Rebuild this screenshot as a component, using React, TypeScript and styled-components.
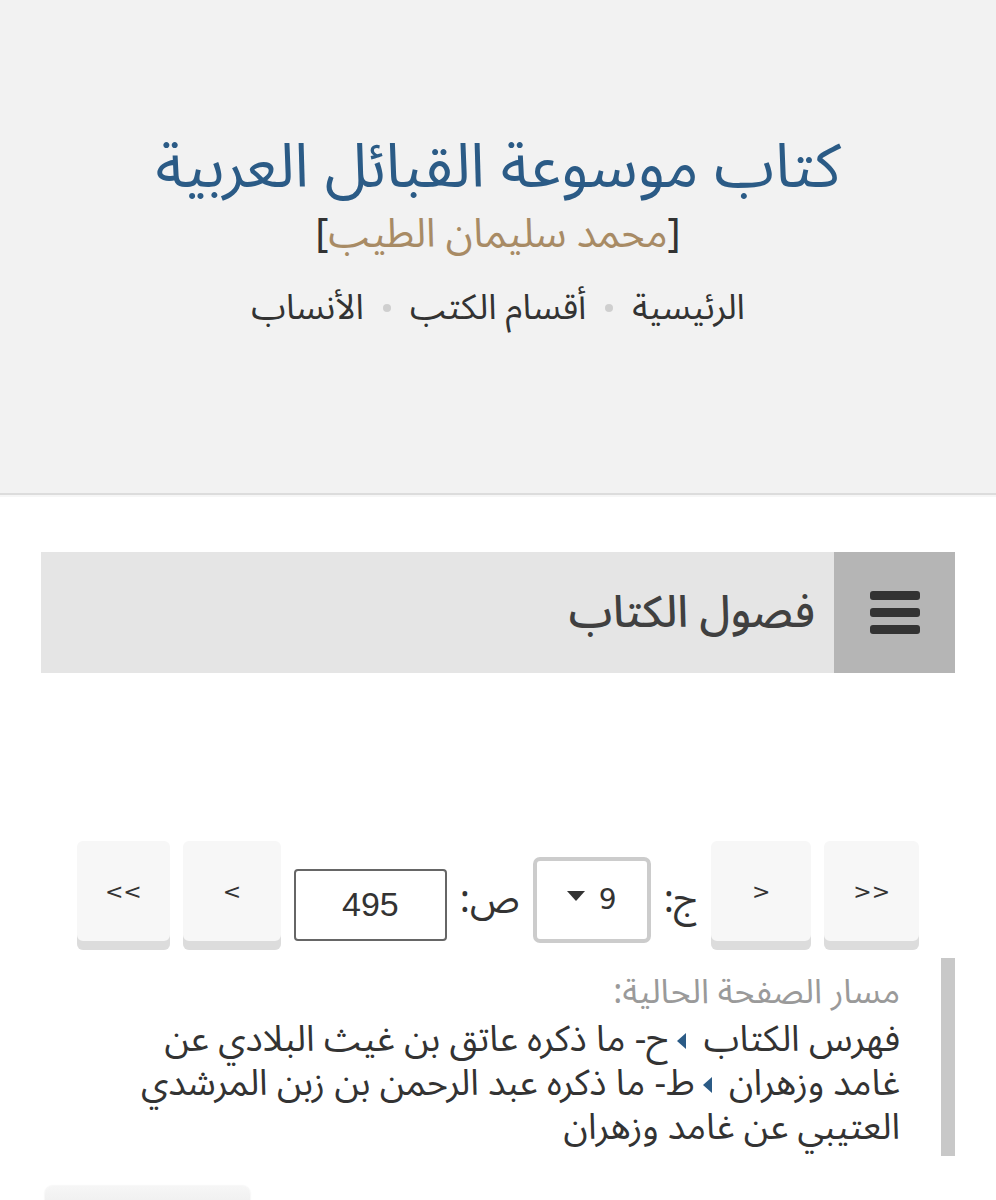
import React from "react";
import styled, { createGlobalStyle } from "styled-components";

const GlobalStyle = createGlobalStyle`
  html, body {
    margin: 0;
    padding: 0;
    background: #ffffff;
  }
  body {
    font-family: "Noto Sans Arabic", "DejaVu Sans", "Noto Sans", sans-serif;
    direction: rtl;
  }
`;

const Page = styled.div`
  width: 996px;
  height: 1200px;
  overflow: hidden;
`;

const Header = styled.header`
  height: 495px;
  background: #f2f2f2;
  border-bottom: 2px solid #dcdcdc;
  box-shadow: 0 2px 0 #f6f6f6;
  display: flex;
  flex-direction: column;
  align-items: center;
  padding-top: 128px;
  box-sizing: border-box;
`;

const Title = styled.h1`
  margin: 0;
  font-size: 61px;
  font-weight: 400;
  line-height: 80px;
  color: #2b5b86;
`;

const Author = styled.div`
  font-size: 40px;
  line-height: 54px;
  color: #333;
`;

const AuthorName = styled.span`
  color: #a88b65;
`;

const Nav = styled.nav`
  margin-top: 21px;
  display: flex;
  align-items: center;
  gap: 19px;
  font-size: 35px;
  line-height: 50px;
  color: #333;
`;

const Dot = styled.span`
  width: 8px;
  height: 8px;
  border-radius: 50%;
  background: #cfcfcf;
`;

const Main = styled.main`
  padding: 57px 41px 0;
`;

const ChaptersBar = styled.div`
  display: flex;
  height: 121px;
  background: #e5e5e5;
`;

const MenuBox = styled.div`
  width: 121px;
  background: #b5b5b5;
  display: flex;
  flex-direction: column;
  align-items: center;
  justify-content: center;
  gap: 8px;
`;

const MenuLine = styled.span`
  width: 50px;
  height: 9px;
  border-radius: 3px;
  background: #333;
`;

const ChaptersTitle = styled.h2`
  margin: 0 19px 0 0;
  align-self: center;
  font-size: 44px;
  font-weight: 500;
  color: #404040;
`;

const Pager = styled.div`
  margin-top: 168px;
  display: flex;
  justify-content: center;
  align-items: center;
  gap: 13px;
`;

const PageButton = styled.button<{ $w: number }>`
  direction: ltr;
  width: ${(p) => p.$w}px;
  height: 109px;
  padding: 0 0 8px;
  border: none;
  border-radius: 6px;
  background: #f7f7f7;
  box-shadow: inset 0 -9px 0 #dcdcdc;
  font-family: "DejaVu Sans", sans-serif;
  font-size: 22px;
  color: #333;
`;

const Label = styled.span`
  font-size: 38px;
  color: #333;
  padding-top: 8px;
`;

const SelectBox = styled.div`
  direction: ltr;
  width: 118px;
  height: 86px;
  box-sizing: border-box;
  border: 4px solid #cccccc;
  border-radius: 7px;
  display: flex;
  align-items: center;
  justify-content: center;
  gap: 14px;
  font-family: "DejaVu Sans", sans-serif;
  font-size: 28px;
  color: #333;
  margin-top: 8px;
`;

const Caret = styled.span`
  width: 0;
  height: 0;
  border-left: 9px solid transparent;
  border-right: 9px solid transparent;
  border-top: 10px solid #333;
  margin-bottom: 8px;
`;

const PageInput = styled.div`
  width: 153px;
  height: 72px;
  box-sizing: border-box;
  border: 2px solid #666;
  border-radius: 4px;
  display: flex;
  align-items: center;
  justify-content: center;
  font-family: "Liberation Sans", sans-serif;
  font-size: 34px;
  color: #333;
  margin-top: 18px;
`;

const Breadcrumb = styled.div`
  margin: 8px 0 0 70px;
  border-right: 14px solid #c8c8c8;
  padding: 8px 41px 6px 0;
`;

const CrumbHeading = styled.div`
  font-size: 34px;
  line-height: 52px;
  color: #9a9a9a;
`;

const CrumbText = styled.div`
  font-size: 36px;
  line-height: 44px;
  color: #333;
`;

const Sep = styled.span`
  display: inline-block;
  width: 0;
  height: 0;
  border-top: 8px solid transparent;
  border-bottom: 8px solid transparent;
  border-right: 9px solid #2b5b86;
  margin: 0 8px;
  vertical-align: middle;
`;

const Bottom = styled.div`
  display: flex;
`;

const BottomButton = styled.div`
  margin: 30px auto 0 4px;
  width: 205px;
  height: 40px;
  border-radius: 8px 8px 0 0;
  background: linear-gradient(#f6f6f6, #e7e7e7);
  box-shadow: 0 0 2px #e2e2e2;
`;

export default function App() {
  return (
    <Page>
      <GlobalStyle />
      <Header>
        <Title>كتاب موسوعة القبائل العربية</Title>
        <Author>
          [<AuthorName>محمد سليمان الطيب</AuthorName>]
        </Author>
        <Nav>
          <span>الرئيسية</span>
          <Dot />
          <span>أقسام الكتب</span>
          <Dot />
          <span>الأنساب</span>
        </Nav>
      </Header>
      <Main>
        <ChaptersBar>
          <MenuBox>
            <MenuLine />
            <MenuLine />
            <MenuLine />
          </MenuBox>
          <ChaptersTitle>فصول الكتاب</ChaptersTitle>
        </ChaptersBar>

        <Pager>
          <PageButton $w={95}>&gt;&gt;</PageButton>
          <PageButton $w={100}>&gt;</PageButton>
          <Label>ج:</Label>
          <SelectBox>
            <Caret />
            <span>9</span>
          </SelectBox>
          <Label>ص:</Label>
          <PageInput>495</PageInput>
          <PageButton $w={98}>&lt;</PageButton>
          <PageButton $w={93}>&lt;&lt;</PageButton>
        </Pager>

        <Breadcrumb>
          <CrumbHeading>مسار الصفحة الحالية:</CrumbHeading>
          <CrumbText>
            فهرس الكتاب <Sep />ح- ما ذكره عاتق بن غيث البلادي عن غامد وزهران <Sep />ط- ما ذكره عبد الرحمن بن زبن المرشدي العتيبي عن غامد وزهران
          </CrumbText>
        </Breadcrumb>

        <Bottom>
          <BottomButton />
        </Bottom>
      </Main>
    </Page>
  );
}
